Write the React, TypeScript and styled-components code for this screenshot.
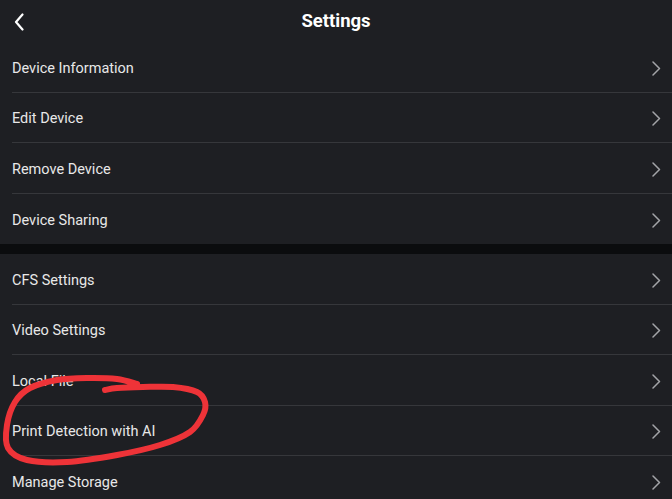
import React from 'react';
import styled, { createGlobalStyle } from 'styled-components';

const sections: string[][] = [
  ['Device Information', 'Edit Device', 'Remove Device', 'Device Sharing'],
  ['CFS Settings', 'Video Settings', 'Local File', 'Print Detection with AI', 'Manage Storage'],
];

// hand-drawn annotation loop, traced from the screenshot
const loopPoints: [number, number][] = [
  [105, 390], [117, 388], [143, 387], [173, 387], [197, 392], [205, 402],
  [203, 415], [190, 432], [160, 445], [117, 455], [67, 462], [27, 460],
  [8, 448], [7, 425], [15, 402], [30, 388], [57, 380], [87, 378],
  [117, 379], [137, 384],
];

const smoothPath = (pts: [number, number][]) => {
  let d = `M${pts[0][0]},${pts[0][1]}`;
  for (let i = 0; i < pts.length - 1; i++) {
    const p0 = pts[i - 1] || pts[i];
    const p1 = pts[i];
    const p2 = pts[i + 1];
    const p3 = pts[i + 2] || p2;
    const c1x = p1[0] + (p2[0] - p0[0]) / 6;
    const c1y = p1[1] + (p2[1] - p0[1]) / 6;
    const c2x = p2[0] - (p3[0] - p1[0]) / 6;
    const c2y = p2[1] - (p3[1] - p1[1]) / 6;
    d += ` C${c1x},${c1y} ${c2x},${c2y} ${p2[0]},${p2[1]}`;
  }
  return d;
};

export default function App() {
  return (
    <>
      <GlobalStyle />
      <Screen>
        <Header>
          <BackButton aria-label="Back">
            <svg width="12" height="18" viewBox="0 0 12 18">
              <path d="M9.5 1.5 L3 9 L9.5 16.5" fill="none" stroke="#fff" strokeWidth="2.2" strokeLinecap="round" strokeLinejoin="round" />
            </svg>
          </BackButton>
          <Title>Settings</Title>
        </Header>

        {sections.map((items, si) => (
          <React.Fragment key={si}>
            {si > 0 && <Band />}
            <Section>
              {items.map((label) => (
                <Row key={label}>
                  <Label>{label}</Label>
                  <Chevron width="9" height="15" viewBox="0 0 9 15">
                    <path d="M1 1 L7.5 7.5 L1 14" fill="none" stroke="#a3a4a8" strokeWidth="1.5" strokeLinecap="round" strokeLinejoin="round" />
                  </Chevron>
                </Row>
              ))}
            </Section>
          </React.Fragment>
        ))}

        <Annotation width="672" height="499" viewBox="0 0 672 499">
          <path d={smoothPath(loopPoints)} fill="none" stroke="#ee3338" strokeWidth="6" strokeLinecap="round" strokeLinejoin="round" />
        </Annotation>
      </Screen>
    </>
  );
}

const GlobalStyle = createGlobalStyle`
  html, body {
    margin: 0;
    padding: 0;
    background: #1e1f23;
  }
  body {
    font-family: Roboto, "Noto Sans", "Liberation Sans", sans-serif;
    -webkit-font-smoothing: antialiased;
  }
`;

const Screen = styled.div`
  position: relative;
  width: 672px;
  height: 499px;
  overflow: hidden;
  background: #1e1f23;
  color: #e8e8e8;
`;

const Header = styled.header`
  position: relative;
  display: flex;
  align-items: center;
  justify-content: center;
  height: 42px;
`;

const BackButton = styled.button`
  position: absolute;
  left: 13px;
  top: 13px;
  display: flex;
  padding: 0;
  border: 0;
  background: none;
`;

const Title = styled.h1`
  margin: 0;
  font-size: 18.5px;
  font-weight: 700;
  color: #fff;
`;

const Section = styled.ul`
  list-style: none;
  margin: 0;
  padding: 0 0 0 12px;
`;

const Row = styled.li`
  display: flex;
  align-items: center;
  justify-content: space-between;
  box-sizing: border-box;
  height: 50.5px;
  padding: 3px 11px 0 0;
  border-bottom: 1px solid #36373b;

  &:last-child {
    border-bottom: 0;
  }
`;

const Label = styled.span`
  font-size: 14.5px;
  color: #e8e8e8;
`;

const Chevron = styled.svg`
  display: block;
`;

const Band = styled.div`
  height: 10px;
  background: #0b0c0e;
`;

const Annotation = styled.svg`
  position: absolute;
  left: 0;
  top: 0;
  pointer-events: none;
`;
